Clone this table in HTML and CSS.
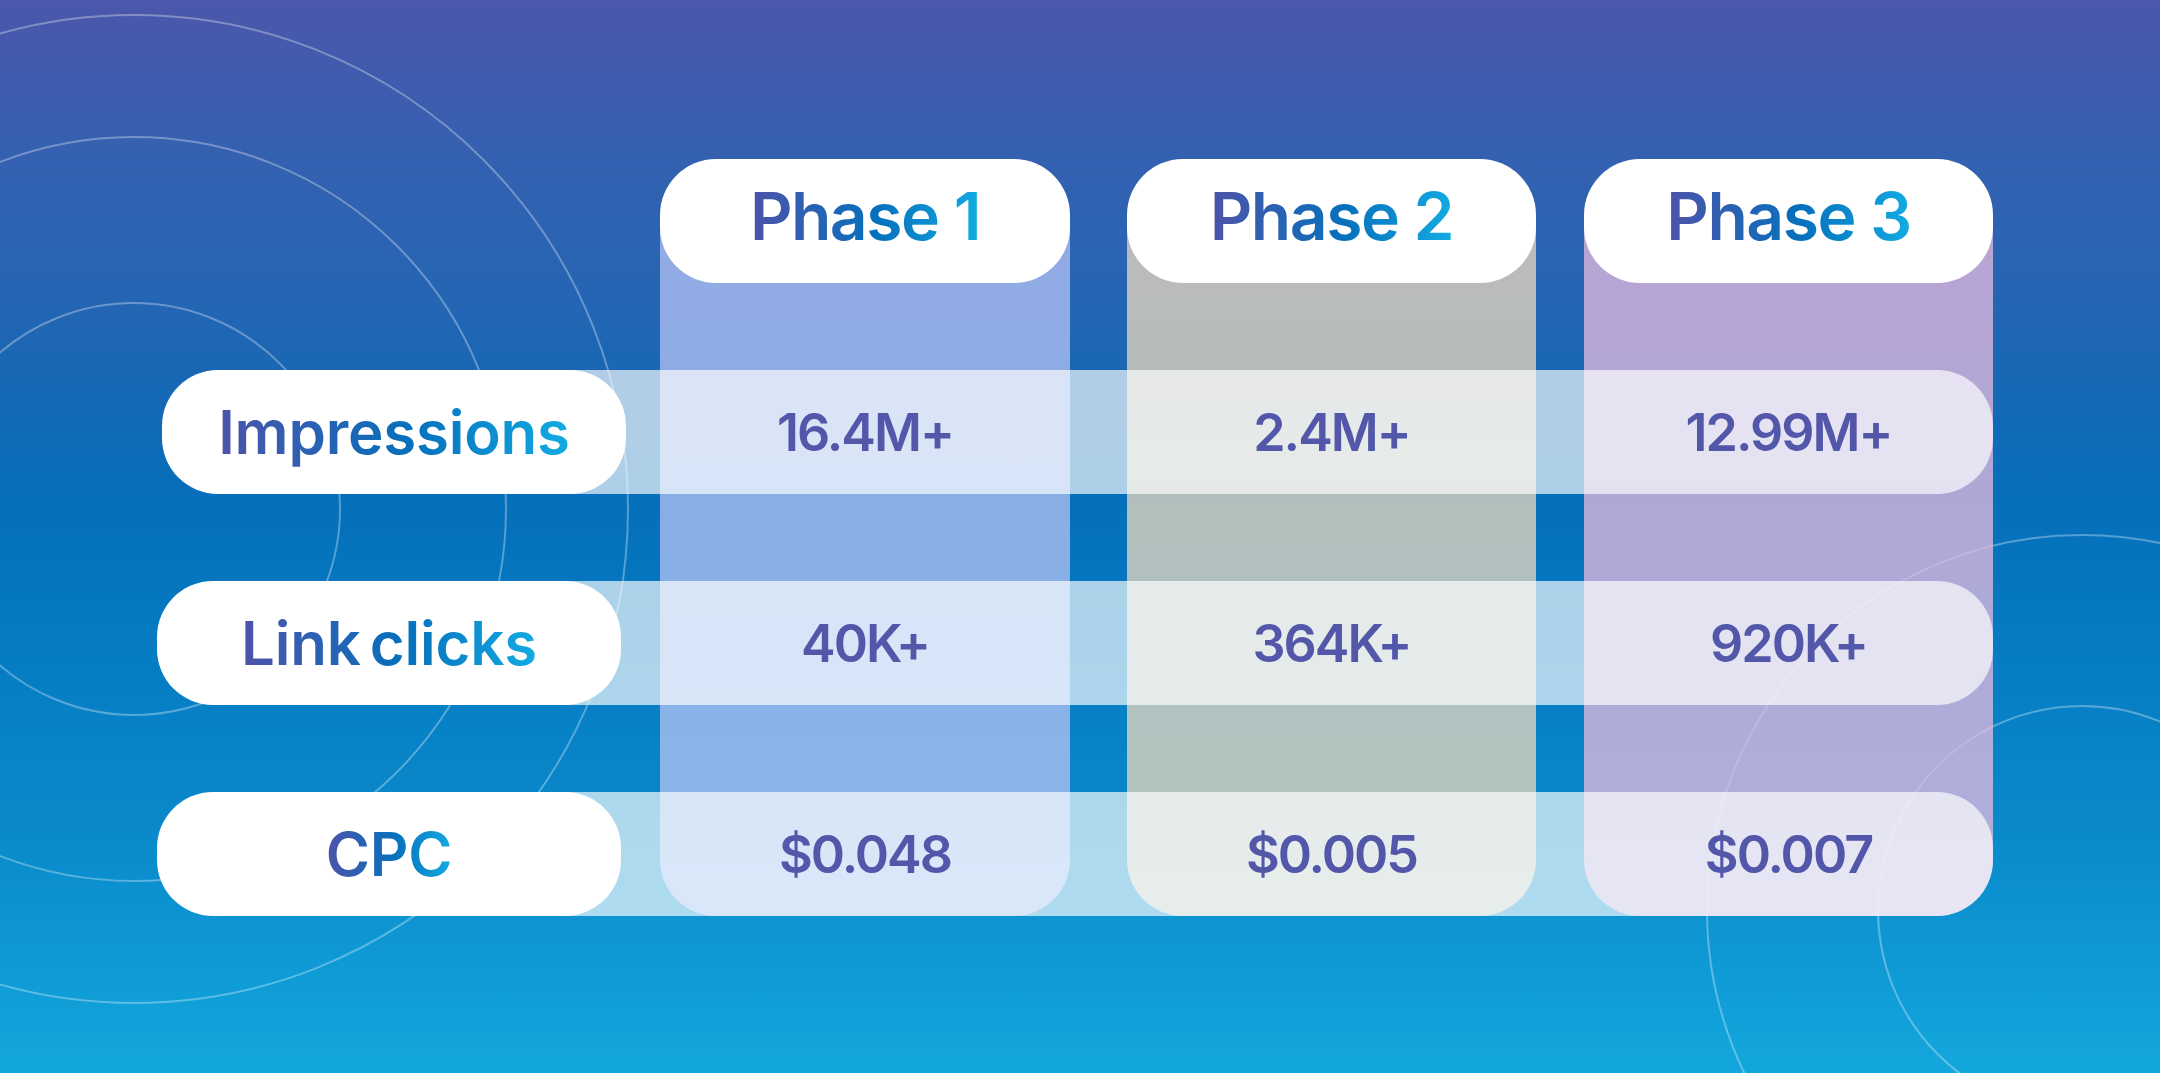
FILE: index.html
```html
<!DOCTYPE html>
<html lang="en">
<head>
<meta charset="utf-8">
<title>Campaign phases</title>
<link rel="stylesheet" href="styles.css">
</head>
<body>
<div class="page">
  <svg class="rings" width="2160" height="1073" viewBox="0 0 2160 1073" aria-hidden="true">
    <g fill="none" stroke="rgba(255,255,255,0.32)" stroke-width="2">
      <circle cx="134" cy="509" r="206"/>
      <circle cx="134" cy="509" r="372"/>
      <circle cx="134" cy="509" r="494"/>
      <circle cx="2082" cy="910" r="204"/>
      <circle cx="2082" cy="910" r="375"/>
    </g>
  </svg>

  <div class="table">
    <div class="col col-1"></div>
    <div class="col col-2"></div>
    <div class="col col-3"></div>

    <div class="band row-1"></div>
    <div class="band row-2"></div>
    <div class="band row-3"></div>

    <div class="head c-1"><span class="grad">Phase 1</span></div>
    <div class="head c-2"><span class="grad">Phase 2</span></div>
    <div class="head c-3"><span class="grad">Phase 3</span></div>

    <div class="label row-1 shift"><span class="grad">Impressions</span></div>
    <div class="label row-2"><span class="grad">Link clicks</span></div>
    <div class="label row-3"><span class="grad">CPC</span></div>

    <div class="val row-1 c-1">16.4M+</div>
    <div class="val row-1 c-2">2.4M+</div>
    <div class="val row-1 c-3">12.99M+</div>

    <div class="val row-2 c-1">40K+</div>
    <div class="val row-2 c-2">364K+</div>
    <div class="val row-2 c-3">920K+</div>

    <div class="val row-3 c-1">$0.048</div>
    <div class="val row-3 c-2">$0.005</div>
    <div class="val row-3 c-3">$0.007</div>
  </div>
</div>
</body>
</html>
```

FILE: styles.css
```css
* { box-sizing: border-box; }

html, body {
  margin: 0;
  padding: 0;
}

body {
  width: 2160px;
  height: 1073px;
  overflow: hidden;
  font-family: Inter, "Noto Sans", "Liberation Sans", sans-serif;
}

.page {
  position: relative;
  width: 2160px;
  height: 1073px;
  background: linear-gradient(180deg,
    #4b57ab 0%,
    #3560b0 14%,
    #2b64b3 23%,
    #1a67b4 34%,
    #056fbb 47%,
    #0579c1 58%,
    #0a8acb 78%,
    #13a7dd 100%);
  padding: 159px 0 0 157px;
}

.rings {
  position: absolute;
  left: 0;
  top: 0;
  z-index: 0;
}

.table {
  position: relative;
  z-index: 1;
  display: grid;
  grid-template-columns: 464px 39px 410px 57px 409px 48px 409px;
  grid-template-rows: repeat(4, 124px);
  row-gap: 87px;
}

/* coloured phase columns */
.col {
  grid-row: 1 / 5;
  margin-top: 62px;
  border-radius: 0 0 56px 56px;
  z-index: 1;
}
.col-1 { grid-column: 3; background: rgba(182, 195, 244, 0.75); }
.col-2 { grid-column: 5; background: rgba(235, 217, 190, 0.75); }
.col-3 { grid-column: 7; background: rgba(231, 187, 223, 0.75); }

/* translucent row bands */
.band {
  grid-column: 1 / -1;
  margin-left: 200px;
  border-radius: 56px;
  background: rgba(255, 255, 255, 0.67);
  z-index: 2;
}

.row-1 { grid-row: 2; }
.row-2 { grid-row: 3; }
.row-3 { grid-row: 4; }

.c-1 { grid-column: 3; }
.c-2 { grid-column: 5; }
.c-3 { grid-column: 7; }

/* white pills */
.head,
.label {
  background: #ffffff;
  border-radius: 56px;
  display: flex;
  align-items: center;
  justify-content: center;
  z-index: 3;
}

.head {
  grid-row: 1;
  font-size: 66px;
  font-weight: 600;
  letter-spacing: -1.5px;
  padding-bottom: 8px;
}

.label {
  grid-column: 1;
  font-size: 60px;
  font-weight: 600;
  letter-spacing: -0.2px;
  word-spacing: -6px;
}

.label.shift {
  margin-left: 5px;
  margin-right: -5px;
}

.grad {
  display: inline-block;
  line-height: 1.2;
  background: linear-gradient(90deg, #4d53a9 0%, #0670bc 55%, #13abe2 100%);
  -webkit-background-clip: text;
  background-clip: text;
  color: transparent;
}

.val {
  display: flex;
  align-items: center;
  justify-content: center;
  color: #5257aa;
  font-size: 52px;
  font-weight: 600;
  letter-spacing: -2px;
  z-index: 3;
}
```
